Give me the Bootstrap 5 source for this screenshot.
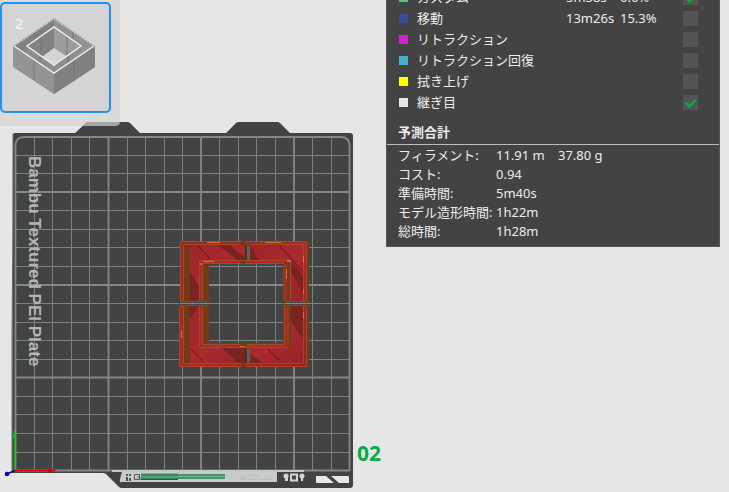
<!DOCTYPE html>
<html lang="ja">
<head>
<meta charset="utf-8">
<meta name="viewport" content="width=device-width, initial-scale=1">
<title>プレビュー</title>
<link href="https://cdn.jsdelivr.net/npm/bootstrap@5.3.0/dist/css/bootstrap.min.css" rel="stylesheet">
<style>
body{background:#e6e6e6;font-family:"Noto Sans","Noto Sans CJK JP",sans-serif;font-size:13px;line-height:19px}
.viewer{min-width:385px}
.scene{width:385px;height:492px}
.plate-tray{left:0;top:0;width:120px;height:126px;background:rgba(205,205,205,.45);border-radius:0 0 5px 0}
.plate-btn{width:111px;height:111px;margin-top:2px;background:#d3d3d3;border:2px solid #2491ec;border-radius:5px}
.stats{width:334px;margin-top:-14px;margin-right:9px;background:#434343;color:#ececec;border:1px solid #56565c}
.legend-row{height:21px;padding-left:12px;padding-right:21px}
.swatch{width:9px;height:9px;margin-right:9px}
.legend-name{width:149px}
.legend-time{width:54px}
.tick{appearance:none;width:15px;height:15px;background:#545454;border-radius:0}
.tick:checked{background:#545454 url("data:image/svg+xml,%3Csvg xmlns='http://www.w3.org/2000/svg' viewBox='0 0 15 15'%3E%3Cpath d='M2.500 7.500l4 4L12.500 5' fill='none' stroke='%2300ae42' stroke-width='2.400'/%3E%3C/svg%3E")}
.totals-title{font-size:13px;line-height:20px;padding:9px 11px 2px;border-bottom:1px solid #bcbcbc}
.totals{margin:1px 0 5px 11px}
.totals th{width:98px}
.amount{width:62px}
.plate-number{font-family:"Noto Sans",sans-serif;font-weight:700}
.plate-label{font-family:"Liberation Sans",sans-serif;font-weight:700}
</style>
</head>
<body>
<main class="d-flex align-items-start overflow-hidden">
<section class="viewer flex-grow-1 position-relative" aria-label="ビルドプレート">
<svg class="scene d-block" viewBox="0 0 385 492" role="img" aria-label="Plate 02">
<defs>
<linearGradient id="red" x1="0" y1="0" x2="1" y2="1"><stop offset="0" stop-color="#9c2529"/><stop offset=".5" stop-color="#a92a2d"/><stop offset="1" stop-color="#96242a"/></linearGradient>
</defs>
<path d="M13 134q0-1 2-1h60l11-10q1-1 3-1h38q2 0 3 1l10 10h86l10-10q1-1 3-1h38q2 0 3 1l10 10h60q3 0 3 3v349q0 3-3 3H122q-2 0-3-1l-11-11q-2-3-5-3H12z" fill="#424443"/>
<path d="M13 134v90l-1 110v138" fill="none" stroke="#686a69"/>
<path d="M86 123q1-1 3-1h31q0 4-4 4H82z" fill="#858887"/>
<g stroke="#7d7f7e" stroke-width="1" fill="none">
<path d="M34.500 137V470M52.500 137V470M71.500 137V470M89.500 137V470M127.500 137V470M145.500 137V470M164.500 137V470M182.500 137V470M219.500 137V470M238.500 137V470M256.500 137V470M275.500 137V470M312.500 137V470M331.500 137V470"/>
<path d="M16 155.500H349M16 173.500H349M16 210.500H349M16 229.500H349M16 247.500H349M16 266.500H349M16 303.500H349M16 322.500H349M16 340.500H349M16 359.500H349M16 396.500H349M16 414.500H349M16 433.500H349M16 452.500H349"/>
</g>
<g stroke="#868887" stroke-width="1.800" fill="none">
<path d="M108.500 137V470M201 137V470M294 137V470M16 192H349M16 285H349M16 377.500H349"/>
<path d="M15.500 470V146q0-9 9-9H341q8.500 0 8.500 9V470"/>
<path d="M15.500 470.500H350" stroke-width="2"/><path d="M112 471H304" stroke="#c2c6c4" stroke-width="2"/>
</g>
<text class="plate-label" transform="translate(29 156) rotate(90)" font-size="17" fill="#b5b5b5">Bambu Textured PEI Plate</text>
<!-- printed model -->
<g>
<path fill-rule="evenodd" d="M180 241H309V302H307V306H309V367H180V306H179V302H180zM209 264V343H283V264z" fill="#73391a"/>
<g fill="url(#red)">
<path d="M190 245H245V261H199V301H190z"/><path d="M250 245H303V301H291V261H250z"/>
<path d="M190 306H199V348H245V363H190z"/><path d="M291 306H303V363H250V348H291z"/>
<path d="M180 241H246V244H183V301H180zM246 241H306V301H303V244H246zM180 306H183V364H245V367H179zM303 306H306V367H246V364H303z"/>
</g>
<g fill="#7b2223"><path d="M218 245h12l15 13v3h-6zM250 245l9 16h-9zM190 272l9 14v15h-9zM291 306h12v33l-12-17zM190 306h9l-9 13zM222 348h23v15h-7zM250 354l13 9h-13zM292 261l11 16v15l-12-20z"/></g>
<path d="M198 246l12 13M280 246l23 26M191 349l12 13M268 349l11 11" stroke="#4e1516" stroke-width=".8"/>
<g fill="#743a18"><path d="M183 246h7v55h-7zM203 264h6v37h-6zM306 243h3v58h-3zM286 262h5v39h-5zM183 307h7v56h-7zM203 307h6v38h-6zM286 307h5v40h-5zM306 307h3v58h-3z"/></g>
<g fill="none" stroke="#b14c25" stroke-width=".8">
<path d="M180.500 301V241.500H242M246 241.500H306.500V301M183 244.500H244M250 244.500H303.500V301M183.500 246V301M199.500 301V260.500H290.500V301M202.500 301V263.500H284V301"/>
<path d="M179.500 306V366.500H242M246 366.500H306.500V306M183.500 306V363.500H241M246 363.500H303.500V306M199.500 306V347.500H288V306M202.500 306V344.500H240M247 344.500H284.500V306"/>
</g>
<g stroke="#a92b2a" stroke-width="2" fill="none"><path d="M201 264V300M200 262H240M246 262H286M286 264V300M201 308V345M203 346H240M247 346H286M286 308V345"/></g>
<g stroke="#d96a30" stroke-width="1" fill="none"><path d="M207 242.500H220M265 242.500H281M203 261.500H214M303.500 256V263M303.500 289V294M303.500 312V319M181.500 330V338M286.500 269V279M240 346.500H245"/></g>
<path d="M180 301.500H209M284 301.500H309M180 305.500H209M284 305.500H309" stroke="#8f4620"/>
<path d="M180 303.500H209M284 303.500H309" stroke="#424443" stroke-width="3"/><path d="M180 303.500H209M284 303.500H309" stroke="#868887" stroke-width="1"/>
<path d="M246 246h4v14h-4zM246 349h4v13h-4z" fill="#5c5f5d"/><path d="M246 246v14M246 349v13" stroke="#2b1815"/>
<path d="M240 242h5v3h-5zM241 261h4v3h-4zM241 343h5v3h-5zM242 364h4v3h-4z" fill="#76380f"/>
<path d="M287 261h4M201 263v2" stroke="#c7a7a8"/>
</g>
<!-- plate footer -->
<path d="M122 472H277V482H122q-3 1-2-3z" fill="#c7cbc9"/>
<path d="M141 473.500H178V480H141z" fill="#348e63"/><path d="M178 474H225V479H178z" fill="#3d976b"/><path d="M141 477H178M178 476.500H225" stroke="#a0b8ab" stroke-width=".7"/><path d="M141 479.500H178" stroke="#265a42"/>
<g fill="#505654"><path d="M126 474h2v2h-2zM129 474h2v2h-2zM126 477h2v4h-2zM129 478h2v3h-2z"/></g>
<path d="M134.500 474.500h5v5h-5zM137 477h3v3" fill="none" stroke="#555b59"/>
<path d="M239 480l4-6 4 6z" fill="#bdc1c0"/><path d="M249 475.500H260M249 479.500H271" stroke="#b2b6b4" stroke-dasharray="2 1"/>
<g fill="#d3d6d4"><circle cx="286" cy="476" r="2.500"/><path d="M285 477h3v4h-3zM301 477h2v4h-2z"/><circle cx="302" cy="476" r="2.500"/></g><path d="M291 474.500h6v6h-6z" fill="none" stroke="#d3d6d4" stroke-width="2"/>
<path d="M316 476h10l8 7h-17q-1 0-1-1zM331 476h17q1 0 1 1v6h-10z" fill="#e8eae9"/>
<!-- axes -->
<path d="M14.500 470V437" stroke="#00b80b" stroke-width="1.500"/><path d="M12.500 438l2-9 2 9z" fill="#06c51b"/>
<path d="M15 470.500H49" stroke="#e20000" stroke-width="1.500"/><path d="M48 468l9 2.500-9 2.500z" fill="#c90909"/>
<path d="M15 470.500l-8 3.500" stroke="#060790" stroke-width="1.500"/><circle cx="7" cy="474" r="2.300" fill="#0000a8"/>
<text class="plate-number" x="357" y="461" font-size="21" fill="#00ae42">02</text>
</svg>
<div class="plate-tray position-absolute">
<button type="button" class="plate-btn p-0 d-block" aria-label="プレート 2">
<svg class="d-block" width="107" height="107" viewBox="2 4 107 107" aria-hidden="true">
<path d="M4 7H105V107H4z" fill="#d5d5d5"/>
<path d="M13 46L54 18 95 46V67L54 94 13 67z" fill="#949494"/>
<path d="M54 73L95 46V67L54 94z" fill="#808080"/>
<path d="M54 19L93 46 81 48 54 28z" fill="#929292"/><path d="M54 19L15 46 26 53V45L54 27z" fill="#818181"/>
<path d="M54 28L28 46 54 65 80 46z" fill="#9c9c9c"/><path d="M54 28L28 46 42 57 54 48z" fill="#828282"/><path d="M54 48L66 56 54 65 42 57z" fill="#d5d5d5"/>
<path d="M26 46L54 65 81 46V52L54 72 26 53z" fill="#8d8d8d"/>
<path d="M41 37V56M67 37V55M34 33v6M73 32v7M34 60V80M74 60V81M40 56v6M68 56v6" stroke="#747474"/>
<path d="M14 46L54 73 94 46M27 46L54 27 81 46 54 65z" fill="none" stroke="#ececec" stroke-width="1.500"/><path d="M14 46L54 19 94 46" fill="none" stroke="#dedede" stroke-dasharray="2 1"/>
<text x="15" y="29" font-family="Noto Sans" font-size="15" fill="#f4f4f4">2</text>
</svg>
</button>
</div>
</section>
<aside class="stats flex-shrink-0">
<div class="legend-row d-flex align-items-center"><span class="swatch" style="background:#53c78a"></span><label class="legend-name" for="c1">カスタム</label><span class="legend-time">5m38s</span><span>6.6%</span><input class="tick ms-auto" type="checkbox" id="c1" checked></div>
<div class="legend-row d-flex align-items-center"><span class="swatch" style="background:#384b9c"></span><label class="legend-name" for="c2">移動</label><span class="legend-time">13m26s</span><span>15.3%</span><input class="tick ms-auto" type="checkbox" id="c2"></div>
<div class="legend-row d-flex align-items-center"><span class="swatch" style="background:#cd22d6"></span><label class="legend-name" for="c3">リトラクション</label><input class="tick ms-auto" type="checkbox" id="c3"></div>
<div class="legend-row d-flex align-items-center"><span class="swatch" style="background:#49adcf"></span><label class="legend-name" for="c4">リトラクション回復</label><input class="tick ms-auto" type="checkbox" id="c4"></div>
<div class="legend-row d-flex align-items-center"><span class="swatch" style="background:#ffff00"></span><label class="legend-name" for="c5">拭き上げ</label><input class="tick ms-auto" type="checkbox" id="c5"></div>
<div class="legend-row d-flex align-items-center"><span class="swatch" style="background:#e6e6e6"></span><label class="legend-name" for="c6">継ぎ目</label><input class="tick ms-auto" type="checkbox" id="c6" checked></div>
<h2 class="totals-title fw-bold mb-0">予測合計</h2>
<table class="totals">
<tbody>
<tr><th class="fw-normal p-0" scope="row">フィラメント:</th><td class="amount p-0">11.91 m</td><td class="p-0">37.80 g</td></tr>
<tr><th class="fw-normal p-0" scope="row">コスト:</th><td class="p-0" colspan="2">0.94</td></tr>
<tr><th class="fw-normal p-0" scope="row">準備時間:</th><td class="p-0" colspan="2">5m40s</td></tr>
<tr><th class="fw-normal p-0 text-nowrap" scope="row">モデル造形時間:</th><td class="p-0" colspan="2">1h22m</td></tr>
<tr><th class="fw-normal p-0" scope="row">総時間:</th><td class="p-0" colspan="2">1h28m</td></tr>
</tbody>
</table>
</aside>
</main>
<script src="https://cdn.jsdelivr.net/npm/bootstrap@5.3.0/dist/js/bootstrap.bundle.min.js"></script>
</body>
</html>
